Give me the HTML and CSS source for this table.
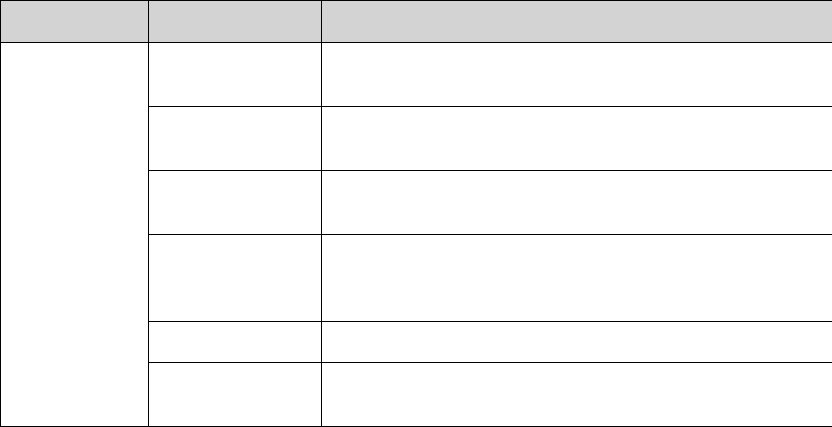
FILE: index.html
```html
<!DOCTYPE html>
<html>
<head>
<meta charset="utf-8">
<link rel="stylesheet" href="styles.css">
</head>
<body>
<table class="grid">
  <colgroup>
    <col class="c1">
    <col class="c2">
    <col class="c3">
  </colgroup>
  <thead>
    <tr class="head"><th></th><th></th><th></th></tr>
  </thead>
  <tbody>
    <tr class="r2"><td rowspan="6"></td><td></td><td></td></tr>
    <tr class="r2"><td></td><td></td></tr>
    <tr class="r2"><td></td><td></td></tr>
    <tr class="r3"><td></td><td></td></tr>
    <tr class="r1"><td></td><td></td></tr>
    <tr class="r2 last"><td></td><td></td></tr>
  </tbody>
</table>
</body>
</html>
```
FILE: styles.css
```css
html, body {
  margin: 0;
  padding: 0;
  background: #fff;
  font-family: "Liberation Serif", serif;
}
.grid {
  border-collapse: collapse;
  table-layout: fixed;
  width: 832px;
}
.grid th, .grid td {
  border: 1px solid #000;
  padding: 0;
}
.c1 { width: 148px; }
.c2 { width: 173px; }
.c3 { width: 511px; }
.head th { background: #d3d3d3; height: 41px; }
.r1 td { height: 40px; }
.r2 td { height: 63px; }
.r3 td { height: 86px; }
```
